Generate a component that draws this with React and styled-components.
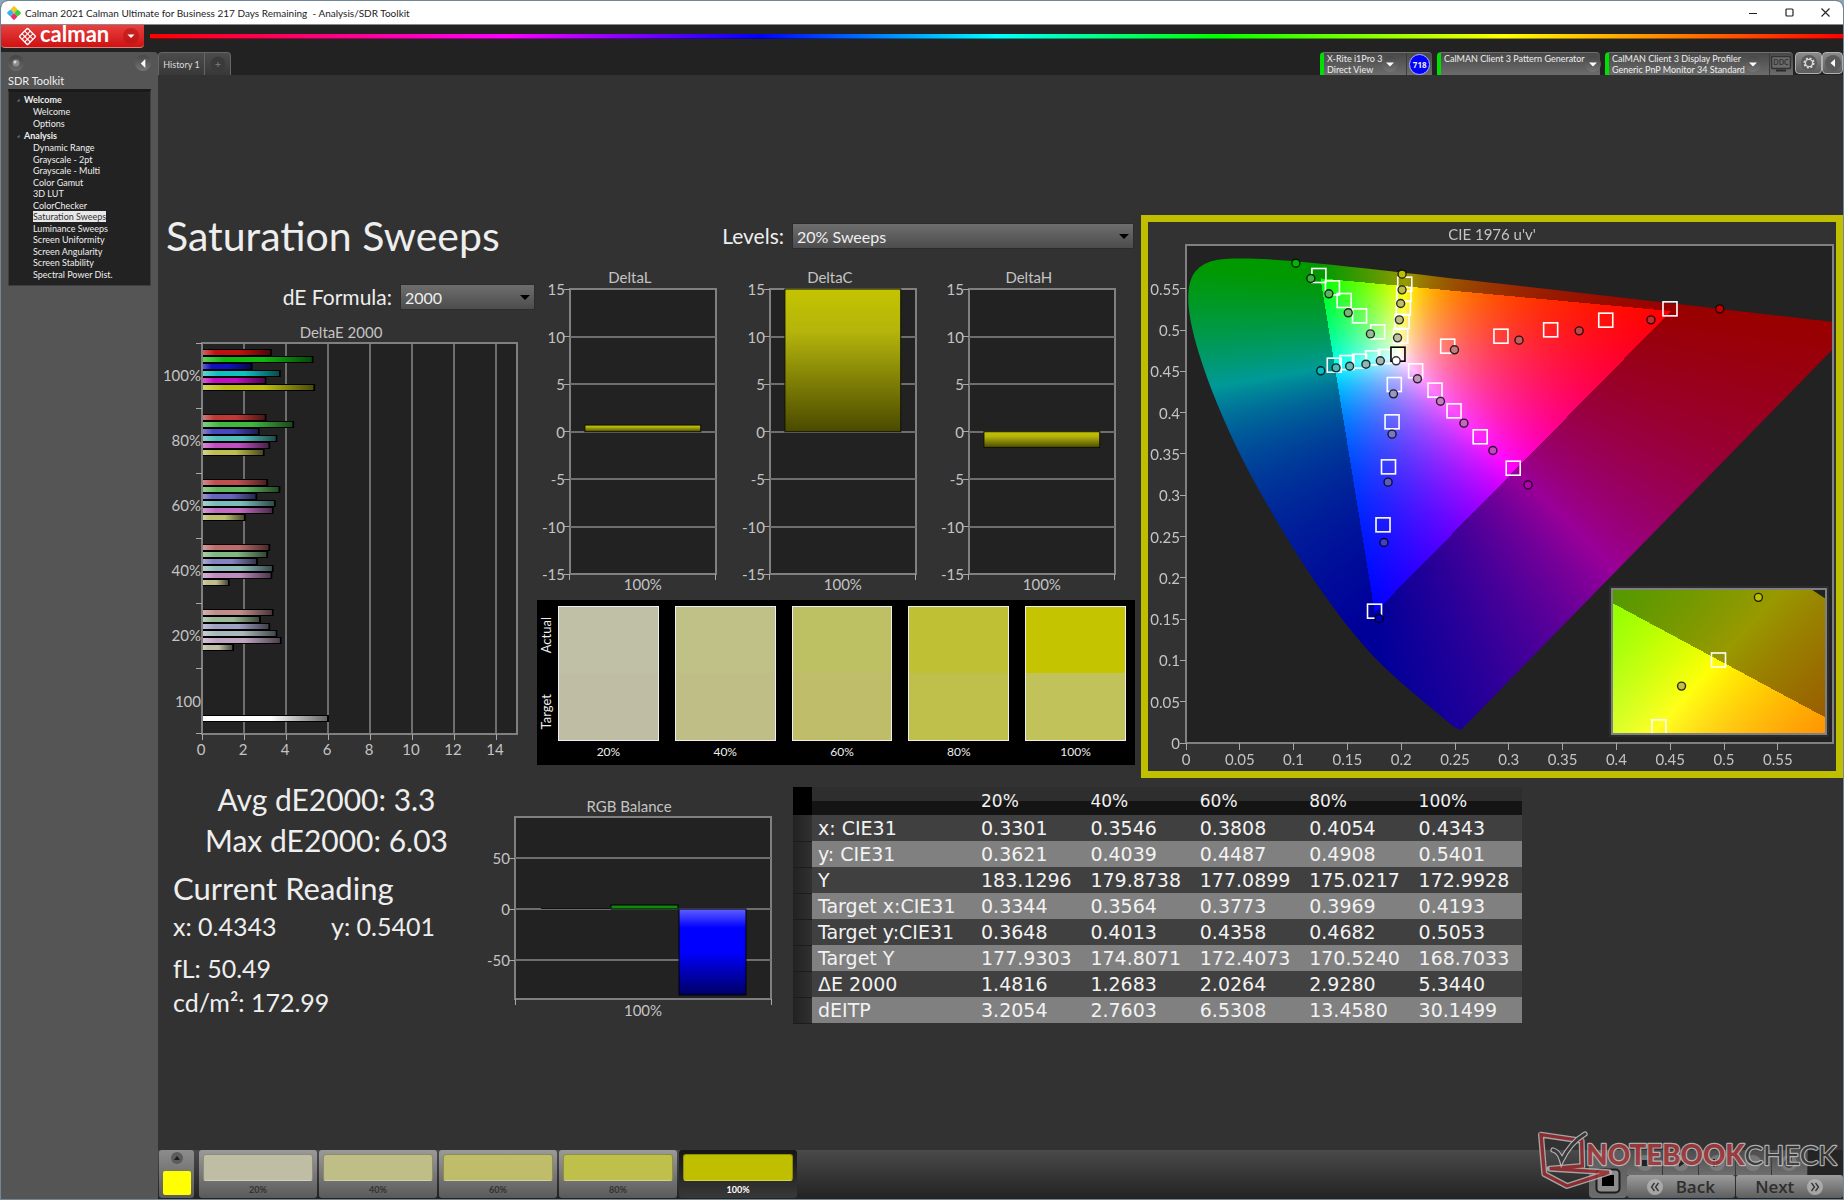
import React, { useLayoutEffect, useRef } from "react";
import styled, { createGlobalStyle, css } from "styled-components";

/* ------------------------------------------------------------------ data */

const NAV = [
  { title: "Welcome", items: ["Welcome", "Options"] },
  {
    title: "Analysis",
    items: [
      "Dynamic Range", "Grayscale - 2pt", "Grayscale - Multi", "Color Gamut", "3D LUT", "ColorChecker",
      "Saturation Sweeps", "Luminance Sweeps", "Screen Uniformity", "Screen Angularity", "Screen Stability",
      "Spectral Power Dist.",
    ],
  },
];

const LEVELS = [
  { label: "20%", actual: "#bfc0a6", target: "#bfbea5" },
  { label: "40%", actual: "#bfc186", target: "#bfbe86" },
  { label: "60%", actual: "#bec163", target: "#bfbd6a" },
  { label: "80%", actual: "#bfc033", target: "#bfc04b" },
  { label: "100%", actual: "#c4c500", target: "#c2c25a" },
];

const TILES = ["#bfbea5", "#bfbe86", "#bfbd6a", "#bfc04b", "#bfbf00"];

const READINGS = [
  ["x: CIE31", "0.3301", "0.3546", "0.3808", "0.4054", "0.4343"],
  ["y: CIE31", "0.3621", "0.4039", "0.4487", "0.4908", "0.5401"],
  ["Y", "183.1296", "179.8738", "177.0899", "175.0217", "172.9928"],
  ["Target x:CIE31", "0.3344", "0.3564", "0.3773", "0.3969", "0.4193"],
  ["Target y:CIE31", "0.3648", "0.4013", "0.4358", "0.4682", "0.5053"],
  ["Target Y", "177.9303", "174.8071", "172.4073", "170.5240", "168.7033"],
  ["ΔE 2000", "1.4816", "1.2683", "2.0264", "2.9280", "5.3440"],
  ["dEITP", "3.2054", "2.7603", "6.5308", "13.4580", "30.1499"],
];

const DELTA_E = [
  { label: "100%", values: [3.28, 5.26, 2.36, 3.7, 3.02, 5.34], colors: ["#c01010", "#10b810", "#1010c0", "#10c0c0", "#c010c0", "#bfbf10"] },
  { label: "80%", values: [3.02, 4.34, 2.7, 3.54, 3.2, 2.93], colors: ["#c03838", "#40b840", "#4848c0", "#50bcbc", "#c050c0", "#bfbf50"] },
  { label: "60%", values: [3.1, 3.68, 2.58, 3.46, 3.36, 2.03], colors: ["#c05050", "#60b860", "#6666c0", "#78bcbc", "#c06cc0", "#bfbf70"] },
  { label: "40%", values: [3.2, 3.1, 2.62, 3.36, 3.3, 1.27], colors: ["#c06c6c", "#80b880", "#8484c0", "#90bcbc", "#c08cc0", "#bfbf8c"] },
  { label: "20%", values: [3.36, 2.76, 3.2, 3.54, 3.74, 1.48], colors: ["#c08c8c", "#98b898", "#a0a0c4", "#a8b8bc", "#c0a4c0", "#bfbfa4"] },
];

const TARGETS = [
  [0.1235, 0.566], [0.1361, 0.551], [0.147, 0.5357], [0.1613, 0.5171], [0.1781, 0.4978],
  [0.2033, 0.5555], [0.2025, 0.543], [0.202, 0.5264], [0.2008, 0.5103], [0.1995, 0.4925],
  [0.2432, 0.4804], [0.2927, 0.4925], [0.3389, 0.5002], [0.3901, 0.5119], [0.4498, 0.5256],
  [0.1378, 0.4574], [0.1496, 0.4606], [0.1613, 0.4623], [0.1735, 0.4663], [0.1853, 0.4679],
  [0.1936, 0.434], [0.1915, 0.3888], [0.1882, 0.3343], [0.1831, 0.2641], [0.1752, 0.1596],
  [0.2134, 0.4506], [0.2314, 0.4272], [0.2491, 0.4021], [0.2734, 0.3707], [0.3041, 0.3327],
];

const MEASURED = [
  [0.1021, 0.5809, "#00b800"], [0.116, 0.5623, "#3cb43c"], [0.1328, 0.5438, "#5cb45c"], [0.1508, 0.5208, "#78b478"], [0.1714, 0.4953, "#98b898"],
  [0.2008, 0.5676, "#bfbf00"], [0.2008, 0.5486, "#bfbf48"], [0.1995, 0.5321, "#bfbf68"], [0.1983, 0.5123, "#bfbf84"], [0.1966, 0.4905, "#bfbfa4"],
  [0.2495, 0.476, "#c08080"], [0.3095, 0.4877, "#c06060"], [0.3654, 0.499, "#c04848"], [0.4321, 0.5123, "#c03030"], [0.496, 0.5256, "#c00000"],
  [0.1252, 0.4506, "#00c0c0"], [0.1395, 0.4542, "#48b8b8"], [0.1521, 0.4562, "#68b8b8"], [0.1672, 0.4586, "#88b8b8"], [0.1806, 0.4627, "#a4b8b8"],
  [0.1928, 0.4227, "#9898c0"], [0.1915, 0.3739, "#7878c0"], [0.1878, 0.3158, "#5c5cc0"], [0.184, 0.2427, "#4040c0"], [0.1794, 0.1507, "#0000b8"],
  [0.2151, 0.4409, "#c098c0"], [0.2365, 0.4138, "#c080c0"], [0.2583, 0.3872, "#c068c0"], [0.2852, 0.3541, "#c048c0"], [0.3179, 0.3125, "#b000b0"],
  [0.1953, 0.4627, "#ffffff"],
];

/* CIE 1931 spectral locus, x and y */
const LOCUS = [
  [0.1733, 0.0048], [0.1714, 0.0051], [0.1689, 0.0069], [0.1644, 0.0109], [0.1566, 0.0177], [0.144, 0.0297],
  [0.1355, 0.0399], [0.1241, 0.0578], [0.1096, 0.0868], [0.0913, 0.1327], [0.0687, 0.2007], [0.0454, 0.295],
  [0.0235, 0.4127], [0.0082, 0.5384], [0.0039, 0.6548], [0.0139, 0.7502], [0.0389, 0.812], [0.0743, 0.8338],
  [0.1142, 0.8262], [0.1547, 0.8059], [0.1929, 0.7816], [0.2296, 0.7543], [0.3016, 0.6923], [0.3731, 0.6245],
  [0.4441, 0.5547], [0.5125, 0.4866], [0.5752, 0.4242], [0.627, 0.3725], [0.6658, 0.334], [0.6915, 0.3083],
  [0.719, 0.2809], [0.7347, 0.2653],
];

/* ---------------------------------------------------------- colour maths */

const xyToUv = (x, y) => {
  const d = -2 * x + 12 * y + 3;
  return [(4 * x) / d, (9 * y) / d];
};

const uvToXy = (u, v) => {
  const d = 6 * u - 16 * v + 12;
  return [(9 * u) / d, (4 * v) / d];
};

function chromaColor(x, y) {
  const X = x / y;
  const Z = (1 - x - y) / y;
  const rgb = [
    3.2406 * X - 1.5372 - 0.4986 * Z,
    -0.9689 * X + 1.8758 + 0.0415 * Z,
    0.0557 * X - 0.204 + 1.057 * Z,
  ];
  const inside = Math.min(...rgb) >= 0;
  const max = Math.max(...rgb);
  return rgb.map((c) => (255 * (inside ? 1 : 0.6) * Math.max(0, c)) / max);
}

/* Fills a rectangle of the canvas with chromaticity colours, cut off at the spectral locus. */
function paintRegion(ctx, rect, toXy, fromXy) {
  const buffer = document.createElement("canvas");
  buffer.width = rect.w;
  buffer.height = rect.h;
  const bctx = buffer.getContext("2d");
  const image = bctx.createImageData(rect.w, rect.h);
  for (let j = 0; j < rect.h; j++) {
    for (let i = 0; i < rect.w; i++) {
      const [x, y] = toXy(rect.x + i + 0.5, rect.y + j + 0.5);
      const [r, g, b] = chromaColor(x, Math.max(y, 0.001));
      const k = 4 * (j * rect.w + i);
      image.data[k] = r;
      image.data[k + 1] = g;
      image.data[k + 2] = b;
      image.data[k + 3] = 255;
    }
  }
  bctx.putImageData(image, 0, 0);
  ctx.save();
  ctx.fillStyle = "#222222";
  ctx.fillRect(rect.x, rect.y, rect.w, rect.h);
  ctx.beginPath();
  ctx.rect(rect.x, rect.y, rect.w, rect.h);
  ctx.clip();
  const pts = LOCUS.map(([x, y]) => fromXy(x, y));
  ctx.beginPath();
  ctx.moveTo(pts[0][0], pts[0][1]);
  for (let n = 1; n < pts.length - 1; n++) {
    const mx = (pts[n][0] + pts[n + 1][0]) / 2;
    const my = (pts[n][1] + pts[n + 1][1]) / 2;
    ctx.quadraticCurveTo(pts[n][0], pts[n][1], mx, my);
  }
  ctx.lineTo(pts[pts.length - 1][0], pts[pts.length - 1][1]);
  ctx.closePath();
  ctx.clip();
  ctx.drawImage(buffer, rect.x, rect.y);
  ctx.restore();
}

/* ---------------------------------------------------------------- styles */

const UI = `Lato, "Open Sans", sans-serif`;

const GlobalStyle = createGlobalStyle`
  *, *::before, *::after { box-sizing: border-box; }
  body { margin: 0; background: #8fa6b8; font-family: ${UI}; color: #eeeeee; }
  button, select { font: inherit; color: inherit; margin: 0; }
  button { padding: 0; border: 0; background: none; cursor: pointer; }
  svg { display: block; }
  h1, h2, p, ul { margin: 0; padding: 0; }
`;

const Window = styled.div`
  min-height: 100vh;
  display: flex;
  flex-direction: column;
  border: 1px solid #6f8799;
  border-radius: 8px 8px 0 0;
  background: #222222;
  overflow: hidden;
  position: relative;
`;

const TitleBar = styled.header`
  height: 24px;
  display: flex;
  align-items: center;
  gap: 4px;
  padding-left: 6px;
  background: #ffffff;
  border-bottom: 1px solid #8a8a8a;
  color: #1c1c1c;
  font: 10px/22px Lato, sans-serif;
  white-space: pre;
`;

const WindowButtons = styled.div`
  margin-left: auto;
  display: flex;
`;

const WindowButton = styled.button`
  width: 36px;
  height: 22px;
  display: grid;
  place-items: center;
`;

const BrandRow = styled.div`
  height: 27px;
  display: flex;
  align-items: flex-start;
  gap: 6px;
`;

const BrandButton = styled.button`
  width: 143px;
  height: 23px;
  display: flex;
  align-items: center;
  padding: 0 5px 0 17px;
  border-radius: 0 0 4px 4px;
  border-bottom: 1px solid #d98080;
  background: linear-gradient(#e84040, #cf1212);
  svg:last-child { margin-left: auto; }
`;

const BrandName = styled.span`
  margin-left: 3px;
  color: #ffffff;
  font: 700 22px/20px Lato, sans-serif;
  padding-bottom: 4px;
`;

const Spectrum = styled.div`
  flex: 1;
  height: 5px;
  margin-top: 9px;
  border-bottom: 1px solid rgba(0, 0, 0, 0.4);
  background: linear-gradient(90deg, #f00, #f0f 21%, #00f 36%, #0ff 50%, #0f0 63%, #ff0 80%, #f00);
`;

const Body = styled.div`
  flex: 1;
  display: grid;
  grid-template-columns: 157px minmax(0, 1fr);
`;

const Sidebar = styled.aside`
  padding: 0 7px;
  background: #555555;
  border-radius: 0 4px 0 0;
`;

const SidebarTools = styled.div`
  height: 22px;
  display: flex;
  justify-content: space-between;
  align-items: center;
`;

const RoundButton = styled.button`
  width: 16px;
  height: 16px;
  border-radius: 50%;
  display: grid;
  place-items: center;
  flex: none;
  background: ${(p) => p.$tone || "linear-gradient(#474747, #747474)"};
`;

const SidebarTitle = styled.h2`
  font-size: 11px;
  line-height: 13px;
  font-weight: 400;
`;

const Tree = styled.nav`
  height: 197px;
  margin-top: 2px;
  padding: 1px 7px 0;
  background: #222222;
  border: 1px solid #3f3f3f;
  border-top: 3px solid #1a1a1a;
  font-size: 9px;
`;

const TreeHead = styled.div`
  height: 13px;
  display: flex;
  align-items: center;
  gap: 4px;
  font-weight: 700;
`;

const TreeList = styled.ul`
  list-style: none;
  display: grid;
  grid-auto-rows: 1fr;
  height: ${(p) => p.$height};
  padding-left: 17px;
`;

const TreeItem = styled.li`
  display: flex;
  align-items: center;
`;

const TreeLink = styled.a`
  line-height: 11px;
  color: #eeeeee;
  text-decoration: none;
  white-space: nowrap;
  ${(p) => p.$current && css`
    background: #e8e8e8;
    color: #333333;
  `}
`;

const Main = styled.main`
  display: flex;
  flex-direction: column;
  min-width: 0;
  background: #323232;
`;

const TabBar = styled.div`
  height: 23px;
  display: flex;
  align-items: stretch;
  background: #222222;
`;

const tabFace = css`
  border: 1px solid #666666;
  border-bottom: 0;
  background: linear-gradient(#4c4c4c, #383838);
`;

const Tab = styled.button`
  ${tabFace}
  width: 47px;
  border-radius: 4px 0 0 0;
  font-size: 9px;
  white-space: nowrap;
  color: #dddddd;
`;

const AddTab = styled.button`
  ${tabFace}
  width: 26px;
  border-left: 0;
  border-radius: 0 4px 0 0;
  display: grid;
  place-items: center;
`;

const Devices = styled.div`
  margin-left: auto;
  display: flex;
  gap: 5px;
`;

const Device = styled.div`
  width: ${(p) => p.$width};
  display: flex;
  border-left: 4px solid #00e000;
  border-radius: 4px 4px 0 0;
  border-top: 1px solid #707070;
  background: linear-gradient(#484848, #6c6c6c);
`;

const DeviceName = styled.p`
  flex: 1;
  padding-left: 3px;
  font-size: 9px;
  line-height: 11px;
  white-space: pre;
`;

const DeviceMenu = styled(RoundButton)`
  margin: 3px 8px 0 0;
`;

const DeviceExtra = styled.div`
  width: 27px;
  display: grid;
  place-items: center;
  border-left: 1px solid #3c3c3c;
`;

const Count = styled.span`
  width: 21px;
  height: 21px;
  border-radius: 50%;
  border: 1px solid #b0b0ff;
  background: #0000ff;
  font: 700 8px/19px "Open Sans", sans-serif;
  text-align: center;
`;

const ToolGroup = styled.div`
  display: flex;
  margin-left: -3px;
`;

const ToolButton = styled.button`
  width: ${(p) => p.$width};
  height: 22px;
  display: grid;
  place-items: center;
  border: 1px solid #b0b0b0;
  border-radius: 4px;
  background: linear-gradient(#8a8a8a, #5c5c5c);
`;

const Dashboard = styled.section`
  flex: 1;
  padding-top: 140px;
`;

const TopGrid = styled.div`
  display: grid;
  grid-template-columns: 379fr 604fr 702fr;
  align-items: start;
`;

const BottomGrid = styled.div`
  display: grid;
  grid-template-columns: 322fr 313fr 729fr 321fr;
  align-items: start;
`;

const Chart = styled.svg`
  width: 100%;
  height: auto;
  font-family: ${UI};
  font-size: 15px;
  fill: #c4c4c4;
`;

const PageTitle = styled.h1`
  padding-left: 8px;
  font-size: 41px;
  line-height: 42px;
  font-weight: 400;
  white-space: nowrap;
`;

const Field = styled.div`
  display: flex;
  justify-content: flex-end;
  align-items: center;
  gap: ${(p) => p.$gap};
  padding: ${(p) => p.$pad};
`;

const FieldLabel = styled.label`
  font-size: 21px;
  line-height: 26px;
  white-space: nowrap;
`;

const SelectBox = styled.span`
  display: grid;
  align-items: center;
  width: ${(p) => p.$width};
  > * { grid-area: 1 / 1; }
  > svg { justify-self: end; margin-right: 5px; pointer-events: none; }
`;

const Select = styled.select`
  appearance: none;
  height: 26px;
  padding: 0 20px 0 4px;
  border: 1px solid #2c2c2c;
  border-radius: 0;
  background: linear-gradient(#6e6e6e, #4c4c4c);
  font-size: 16px;
`;

const DeltaRow = styled.div`
  display: grid;
  grid-template-columns: repeat(3, 1fr);
  padding: 19px 5px 0 0;
`;

const SwatchPanel = styled.div`
  height: 165px;
  display: flex;
  margin: 3px 6px 0 0;
  padding: 6px 9px 0 1px;
  background: #000000;
`;

const SideLabels = styled.div`
  width: 20px;
  height: 135px;
  display: flex;
  flex-direction: column;
  justify-content: space-between;
  padding: 11px 0 12px;
  font-size: 13px;
  line-height: 16px;
  span { writing-mode: vertical-rl; transform: rotate(180deg); }
`;

const Swatches = styled.div`
  flex: 1;
  display: grid;
  grid-template-columns: repeat(5, 1fr);
  gap: 16px;
`;

const Swatch = styled.figure`
  margin: 0;
  text-align: center;
  font-size: 12px;
  line-height: 21px;
`;

const SwatchFace = styled.div`
  height: 135px;
  border: 1px solid #eeeeee;
  background: linear-gradient(${(p) => p.$actual} 50%, ${(p) => p.$target} 50%);
`;

const CieFrame = styled.div`
  display: grid;
  border: 7px solid #bfbf00;
  > * { grid-area: 1 / 1; }
  canvas { width: 100%; height: auto; display: block; }
`;

const Stats = styled.div`
  padding: 1px 0 0 15px;
  font-size: 25px;
  line-height: 34px;
  white-space: nowrap;
`;

const Summary = styled.p`
  font-size: 30px;
  line-height: 41px;
  text-align: center;
`;

const StatsTitle = styled.h2`
  margin-top: 7px;
  font-size: 31px;
  line-height: 41px;
  font-weight: 400;
`;

const Pair = styled.p`
  display: grid;
  grid-template-columns: 158px 1fr;
  margin-bottom: 8px;
`;

const DataTable = styled.table`
  width: 100%;
  margin-top: 9px;
  border-collapse: collapse;
  table-layout: fixed;
  font: 19px/22px "DejaVu Sans", sans-serif;
  color: #f2f2f2;
  th, td {
    height: 26px;
    padding: 0 0 0 6px;
    font-weight: 400;
    text-align: left;
    white-space: nowrap;
  }
  thead th {
    height: 28px;
    font-size: 17px;
    background: linear-gradient(#2e2e2e 50%, #141414 50%);
  }
  thead td { background: #000000; }
  tbody td:first-child { background: linear-gradient(90deg, #222222, #303030); border-bottom: 1px solid #1c1c1c; }
`;

const DataRow = styled.tr`
  background: ${(p) => (p.$light ? "#808080" : "#404040")};
`;

const Footer = styled.footer`
  height: 49px;
  display: flex;
  gap: 5px;
  padding: 0 0 1px 1px;
  background: linear-gradient(#4a4a4a, #222222);
`;

const PatternPicker = styled.button`
  width: 35px;
  display: flex;
  flex-direction: column;
  align-items: center;
  gap: 7px;
  padding-top: 2px;
  border-radius: 3px;
  background: linear-gradient(#8c8c8c, #5a5a5a);
`;

const PatternColor = styled.span`
  width: 28px;
  height: 24px;
  border-radius: 2px;
  background: #ffff00;
`;

const TileRow = styled.div`
  display: flex;
  gap: 2px;
`;

const Tile = styled.button`
  width: 118px;
  display: flex;
  flex-direction: column;
  padding: 4px 4px 0;
  border-radius: 3px;
  background: ${(p) => (p.$current ? "linear-gradient(#161616, #383838)" : "linear-gradient(#9a9a9a, #5a5a5a)")};
  color: ${(p) => (p.$current ? "#ffffff" : "#333333")};
  font: 700 9px/16px Lato, sans-serif;
`;

const TileFace = styled.span`
  width: 100%;
  height: 29px;
  margin-bottom: 1px;
  border: 1px solid rgba(0, 0, 0, 0.25);
  border-bottom-color: rgba(255, 255, 255, 0.3);
  border-radius: 3px;
  background: ${(p) => p.$color};
`;

const Transport = styled.div`
  width: 254px;
  margin-left: auto;
  display: grid;
  grid-template-columns: 38px 1fr;
`;

const StopButton = styled.button`
  display: grid;
  align-content: end;
  justify-items: center;
  padding-bottom: 4px;
  border-radius: 4px;
  background: linear-gradient(#5c5c5c, #6c6c6c);
`;

const TransportRows = styled.div`
  display: grid;
  grid-template-rows: 25px 1fr;
`;

const PlayRow = styled.div`
  display: grid;
  grid-template-columns: repeat(6, 1fr);
  gap: 1px;
`;

const PlayButton = styled.button`
  display: grid;
  place-items: center;
  background: ${(p) => (p.$off ? "#242424" : "linear-gradient(#4c4c4c, #6e6e6e)")};
`;

const StepRow = styled.div`
  display: grid;
  grid-template-columns: 1fr 1fr;
  gap: 1px;
`;

const StepButton = styled.button`
  display: flex;
  align-items: center;
  justify-content: center;
  gap: 13px;
  border-radius: 3px;
  background: linear-gradient(#9c9c9c, #5e5e5e);
  color: #2e2e2e;
  font: 600 17px/20px "Open Sans", sans-serif;
`;

const Watermark = styled.svg`
  position: absolute;
  right: 0;
  bottom: 0;
  width: 314px;
  height: 75px;
  pointer-events: none;
`;

/* ----------------------------------------------------------------- parts */

const Triangle = ({ points, size = 10, fill = "#ffffff" }) => (
  <svg width={size} height={size} viewBox="0 0 10 10" aria-hidden="true">
    <polygon points={points} fill={fill} />
  </svg>
);
const DOWN = "0,3 10,3 5,8";
const LEFT = "7,0 7,10 2,5";

function AppIcon() {
  return (
    <svg width="14" height="14" viewBox="0 0 14 14" aria-hidden="true">
      <rect x="4.4" y="0.8" width="5.2" height="5.2" rx="1" transform="rotate(45 7 3.4)" fill="#f7c51e" />
      <rect x="0.8" y="4.4" width="5.2" height="5.2" rx="1" transform="rotate(45 3.4 7)" fill="#35b4e8" />
      <rect x="8" y="4.4" width="5.2" height="5.2" rx="1" transform="rotate(45 10.6 7)" fill="#3bd13b" />
      <rect x="4.4" y="8" width="5.2" height="5.2" rx="1" transform="rotate(45 7 10.6)" fill="#ef2d6d" />
    </svg>
  );
}

function BrandMark() {
  const cells = [];
  for (let r = 0; r < 3; r++) for (let c = 0; c < 3; c++) cells.push([r, c]);
  return (
    <svg width="19" height="19" viewBox="0 0 19 19" aria-hidden="true">
      <g transform="rotate(45 9.5 9.5)">
        <rect x="3" y="3" width="13" height="13" rx="1.5" fill="#ffffff" />
        {cells.map(([r, c]) => (
          <rect key={`${r}${c}`} x={4.3 + 3.8 * c} y={4.3 + 3.8 * r} width="2.8" height="2.8" rx="0.8" fill="#d92626" />
        ))}
      </g>
    </svg>
  );
}

const Tick = (props) => <line stroke="#a8a8a8" strokeWidth="1" shapeRendering="crispEdges" {...props} />;
const Grid = (props) => <line stroke="#6e6e6e" strokeWidth="2" shapeRendering="crispEdges" {...props} />;
const Plot = ({ x, y, w, h }) => (
  <rect x={x} y={y} width={w} height={h} fill="#222222" stroke="#808080" strokeWidth="2" shapeRendering="crispEdges" />
);

function HorizontalBar({ x, y, length, color }) {
  return (
    <g>
      <rect x={x} y={y - 1} width={length + 1} height="7" fill="#000000" />
      <rect x={x} y={y} width={length - 1} height="5" fill={color} />
      <rect x={x} y={y} width={length - 1} height="5" fill="url(#shade)" />
    </g>
  );
}

function DeltaEChart() {
  const left = 44;
  const top = 17;
  const unit = 21;
  const band = 65;
  return (
    <Chart viewBox="0 -5 379 445" role="img" aria-label="DeltaE 2000">
      <defs>
        <linearGradient id="shade" x1="0" x2="1">
          <stop offset="0" stopColor="#fff" stopOpacity="0.35" />
          <stop offset="0.2" stopColor="#fff" stopOpacity="0" />
          <stop offset="0.55" stopColor="#000" stopOpacity="0" />
          <stop offset="1" stopColor="#000" stopOpacity="0.6" />
        </linearGradient>
      </defs>
      <text x="183" y="12" textAnchor="middle">DeltaE 2000</text>
      <rect x={left} y={top} width="315" height="391" fill="#222222" />
      {[2, 4, 6, 8, 10, 12, 14].map((n) => (
        <Grid key={n} x1={left + unit * n} x2={left + unit * n} y1={top} y2={top + 391} />
      ))}
      {DELTA_E.map((group, g) => (
        <g key={group.label}>
          <text x="43" y={top + band * g + 38} textAnchor="end">{group.label}</text>
          {group.values.map((value, i) => (
            <HorizontalBar key={i} x={left} y={top + band * g + 7 + i * 7} length={value * unit} color={group.colors[i]} />
          ))}
        </g>
      ))}
      <text x="43" y={top + band * 5 + 39} textAnchor="end">100</text>
      <HorizontalBar x={left} y={390} length={126} color="#ffffff" />
      <rect x={left} y={top} width="315" height="391" fill="none" stroke="#808080" strokeWidth="2" shapeRendering="crispEdges" />
      {[0, 1, 2, 3, 4, 5, 6].map((n) => (
        <Tick key={n} x1={left - 6} x2={left} y1={top + band * n + 0.5} y2={top + band * n + 0.5} />
      ))}
      {[0, 2, 4, 6, 8, 10, 12, 14].map((n) => (
        <g key={n}>
          <Tick x1={left + unit * n} x2={left + unit * n} y1="408" y2="414" />
          <text x={left + unit * n - 1} y="429" textAnchor="middle">{n}</text>
        </g>
      ))}
    </Chart>
  );
}

function DeltaChart({ title, value }) {
  const zero = 164;
  const unit = 9.53;
  const shown = Math.min(value, 15);
  const y = shown > 0 ? zero - shown * unit : zero;
  return (
    <Chart viewBox="0 0 200 330" role="img" aria-label={title}>
      <defs>
        <linearGradient id={`fade${title}`} x1="0" x2="0" y1="0" y2="1">
          <stop offset="0" stopColor="#c4c400" />
          <stop offset="0.3" stopColor="#b4b40c" />
          <stop offset="1" stopColor="#4a4a00" />
        </linearGradient>
      </defs>
      <text x="93" y="15" textAnchor="middle">{title}</text>
      <Plot x={33} y={21} w={146} h={286} />
      {[15, 10, 5, 0, -5, -10, -15].map((n) => (
        <g key={n}>
          {Math.abs(n) < 15 && <Grid x1="33" x2="179" y1={zero - n * unit} y2={zero - n * unit} />}
          <Tick x1="27" x2="33" y1={zero - n * unit} y2={zero - n * unit} />
          <text x="28" y={zero - n * unit + 6} textAnchor="end">{n}</text>
        </g>
      ))}
      <rect x="48" y={y} width="116" height={Math.abs(shown) * unit} fill={`url(#fade${title})`} stroke="#111100" strokeWidth="1" />
      <Tick x1="33" x2="33" y1="307" y2="313" />
      <Tick x1="179" x2="179" y1="307" y2="313" />
      <text x="106" y="323" textAnchor="middle">100%</text>
    </Chart>
  );
}

function RgbChart() {
  return (
    <Chart viewBox="0 0 313 245" role="img" aria-label="RGB Balance">
      <defs>
        <linearGradient id="blueBar" x1="0" x2="0" y1="0" y2="1">
          <stop offset="0" stopColor="#6060ff" />
          <stop offset="0.22" stopColor="#0000ff" />
          <stop offset="0.5" stopColor="#0000ff" />
          <stop offset="1" stopColor="#000064" />
        </linearGradient>
      </defs>
      <text x="149" y="34" textAnchor="middle">RGB Balance</text>
      <Plot x={35} y={39} w={256} h={182} />
      {[50, 0, -50].map((n) => (
        <g key={n}>
          <Grid x1="35" x2="291" y1={131 - n * 1.02} y2={131 - n * 1.02} />
          <Tick x1="29" x2="35" y1={131 - n * 1.02} y2={131 - n * 1.02} />
          <text x="30" y={137 - n * 1.02} textAnchor="end">{n}</text>
        </g>
      ))}
      <rect x="61" y="130" width="69" height="1" fill="#111111" />
      <rect x="131" y="127" width="67" height="4" fill="#0c8a0c" stroke="#000000" />
      <rect x="199" y="131" width="67" height="86" fill="url(#blueBar)" stroke="#000000" />
      <Tick x1="35" x2="35" y1="221" y2="227" />
      <Tick x1="291" x2="291" y1="221" y2="227" />
      <text x="163" y="238" textAnchor="middle">100%</text>
    </Chart>
  );
}

const CIE = { w: 688, h: 549, left: 38, right: 685, top: 23, bottom: 521, u: 1076, v: 826 };
const INSET = { x: 464, y: 367, w: 214, h: 145, cx: 570.5, cy: 438, kx: 2660, ky: 1800 };
const cieX = (u) => CIE.left + CIE.u * u;
const cieY = (v) => CIE.bottom - CIE.v * v;
const insetX = (x) => INSET.cx + (x - 0.4193) * INSET.kx;
const insetY = (y) => INSET.cy - (y - 0.5053) * INSET.ky;

const Square = ({ x, y, color = "#ffffff" }) => (
  <rect x={x - 7} y={y - 7} width="14" height="14" fill="none" stroke={color} strokeWidth="1.6" />
);
const Dot = ({ x, y, color }) => <circle cx={x} cy={y} r="4" fill={color} stroke="#000000" strokeOpacity="0.8" strokeWidth="1.4" />;

function CieChart() {
  const ref = useRef(null);
  useLayoutEffect(() => {
    const ctx = ref.current.getContext("2d");
    paintRegion(
      ctx,
      { x: CIE.left, y: CIE.top, w: CIE.right - CIE.left, h: CIE.bottom - CIE.top },
      (px, py) => uvToXy((px - CIE.left) / CIE.u, (CIE.bottom - py) / CIE.v),
      (x, y) => {
        const [u, v] = xyToUv(x, y);
        return [cieX(u), cieY(v)];
      }
    );
    ctx.fillStyle = "#2c2c2c";
    ctx.fillRect(INSET.x - 3, INSET.y - 3, INSET.w + 6, INSET.h + 6);
    paintRegion(
      ctx,
      INSET,
      (px, py) => [0.4193 + (px - INSET.cx) / INSET.kx, 0.5053 + (INSET.cy - py) / INSET.ky],
      (x, y) => [insetX(x), insetY(y)]
    );
  }, []);

  const steps = Array.from({ length: 12 }, (_, n) => Number((n * 0.05).toFixed(2)));
  return (
    <CieFrame>
      <canvas ref={ref} width={CIE.w} height={CIE.h} />
      <Chart viewBox={`0 0 ${CIE.w} ${CIE.h}`} role="img" aria-label="CIE 1976 u'v'">
        <defs>
          <clipPath id="insetClip">
            <rect x={INSET.x} y={INSET.y} width={INSET.w} height={INSET.h} />
          </clipPath>
        </defs>
        <text x="344" y="18" textAnchor="middle">CIE 1976 u'v'</text>
        <rect x={CIE.left} y={CIE.top} width={CIE.right - CIE.left} height={CIE.bottom - CIE.top} fill="none" stroke="#808080" strokeWidth="2" />
        {steps.map((n) => (
          <g key={n}>
            <Tick x1={cieX(n)} x2={cieX(n)} y1={CIE.bottom} y2={CIE.bottom + 7} />
            <text x={cieX(n)} y="543" textAnchor="middle">{n}</text>
            <Tick x1={CIE.left - 6} x2={CIE.left} y1={cieY(n)} y2={cieY(n)} />
            <text x={CIE.left - 6} y={cieY(n) + 6} textAnchor="end">{n}</text>
          </g>
        ))}
        {TARGETS.map(([u, v]) => <Square key={`${u}-${v}`} x={cieX(u)} y={cieY(v)} />)}
        <Square x={cieX(0.197)} y={cieY(0.4707)} color="#000000" />
        {MEASURED.map(([u, v, color]) => <Dot key={`${u}-${v}`} x={cieX(u)} y={cieY(v)} color={color} />)}
        <g clipPath="url(#insetClip)">
          <Square x={insetX(0.4193)} y={insetY(0.5053)} />
          <Square x={insetX(0.3969)} y={insetY(0.4682)} />
          <Dot x={insetX(0.4343)} y={insetY(0.5401)} color="#bfbf00" />
          <Dot x={insetX(0.4054)} y={insetY(0.4908)} color="#bfbf48" />
        </g>
        <rect x={INSET.x} y={INSET.y} width={INSET.w} height={INSET.h} fill="none" stroke="#808080" strokeWidth="2" />
      </Chart>
    </CieFrame>
  );
}

function PlayIcon({ kind }) {
  return (
    <svg width="18" height="18" viewBox="0 0 18 18" aria-hidden="true">
      <circle cx="9" cy="9" r="8" fill="#8a8a8a" opacity="0.6" />
      {kind === "stop" && <rect x="6" y="6" width="6" height="6" fill="#222" />}
      {kind === "play" && <path d="M7 5 L13 9 L7 13Z" fill="#222" />}
      {kind === "step" && <path d="M5 5h2v8h-2z M8 5 L13 9 L8 13Z" fill="#222" />}
      {kind === "loop" && <path d="M4 9q2.5-4 5 0t5 0" fill="none" stroke="#333" strokeWidth="1.6" />}
      {kind === "refresh" && <path d="M13 9a4 4 0 1 1-2-3.4 M11 3v3h-3" fill="none" stroke="#333" strokeWidth="1.5" />}
    </svg>
  );
}

function Chevrons({ back }) {
  return (
    <svg width="16" height="16" viewBox="0 0 16 16" aria-hidden="true">
      <circle cx="8" cy="8" r="8" fill="#b4b4b4" opacity="0.8" />
      <path
        d={back ? "M7.5 4L4.5 8l3 4M11.5 4l-3 4 3 4" : "M4.5 4l3 4-3 4M8.5 4l3 4-3 4"}
        fill="none" stroke="#333333" strokeWidth="1.3"
      />
    </svg>
  );
}

function NotebookCheck() {
  const box = "M36 32 L158 50 L160 126 L62 134 L240 145 L114 186 L46 150 Z";
  const tick = "M72 78 q18 4 26 32 q26 -54 70 -80";
  const text = { x: 172, y: 122, fontFamily: "Lato, sans-serif", strokeWidth: 7, strokeLinejoin: "round", paintOrder: "stroke", stroke: "#c4c4c4" };
  return (
    <Watermark viewBox="0 0 942 225" aria-label="NotebookCheck" opacity="0.85">
      <path d={box} fill="none" stroke="#b8b8b8" strokeWidth="18" strokeLinejoin="round" />
      <path d={box} fill="none" stroke="#9c2c30" strokeWidth="10" strokeLinejoin="miter" />
      <path d={tick} fill="none" stroke="#c8c8c8" strokeWidth="16" strokeLinecap="round" />
      <path d={tick} fill="none" stroke="#383838" strokeWidth="9" strokeLinecap="round" />
      <text {...text} fontSize="83">
        <tspan fontWeight="900" fill="#a8383c">NOTEBOOK</tspan>
        <tspan fontWeight="400" fill="#3a3a3a">CHECK</tspan>
      </text>
    </Watermark>
  );
}

/* ------------------------------------------------------------------- app */

export default function App() {
  return (
    <>
      <GlobalStyle />
      <Window>
        <TitleBar>
          <AppIcon />
          <span>{"Calman 2021 Calman Ultimate for Business 217 Days Remaining  - Analysis/SDR Toolkit"}</span>
          <WindowButtons>
            <WindowButton aria-label="Minimize">
              <svg width="9" height="9"><path d="M0 5.5h8" stroke="#222" /></svg>
            </WindowButton>
            <WindowButton aria-label="Maximize">
              <svg width="9" height="9"><rect x="1" y="1" width="7" height="7" rx="1" fill="none" stroke="#222" strokeWidth="1.2" /></svg>
            </WindowButton>
            <WindowButton aria-label="Close">
              <svg width="9" height="9"><path d="M0.5 0.5l8 8M8.5 0.5l-8 8" stroke="#222" strokeWidth="1.1" /></svg>
            </WindowButton>
          </WindowButtons>
        </TitleBar>

        <BrandRow>
          <BrandButton aria-label="calman menu">
            <BrandMark />
            <BrandName>calman</BrandName>
            <svg width="16" height="16" viewBox="0 0 16 16">
              <circle cx="8" cy="8" r="8" fill="#b81414" opacity="0.6" />
              <polygon points="4.5,6.5 11.5,6.5 8,10" fill="#ffffff" />
            </svg>
          </BrandButton>
          <Spectrum />
        </BrandRow>

        <Body>
          <Sidebar>
            <SidebarTools>
              <RoundButton aria-label="Status" $tone="linear-gradient(#444444, #6a6a6a)">
                <svg width="8" height="8">
                  <circle cx="4" cy="4" r="3.5" fill="#8c8c8c" />
                  <circle cx="3" cy="3" r="1.5" fill="#d8d8d8" />
                </svg>
              </RoundButton>
              <RoundButton aria-label="Collapse"><Triangle points={LEFT} size={9} /></RoundButton>
            </SidebarTools>
            <SidebarTitle>SDR Toolkit</SidebarTitle>
            <Tree>
              {NAV.map((group, g) => (
                <React.Fragment key={group.title}>
                  <TreeHead>
                    <Triangle points="9,2 9,9 2,9" size={4} fill="#777777" />
                    {group.title}
                  </TreeHead>
                  <TreeList $height={g ? "138px" : "23px"}>
                    {group.items.map((item) => (
                      <TreeItem key={item}>
                        <TreeLink href="#" $current={item === "Saturation Sweeps"}>{item}</TreeLink>
                      </TreeItem>
                    ))}
                  </TreeList>
                </React.Fragment>
              ))}
            </Tree>
          </Sidebar>

          <Main>
            <TabBar>
              <Tab>History 1</Tab>
              <AddTab aria-label="Add history">
                <svg width="16" height="16"><circle cx="8" cy="8" r="7.5" fill="#3a3a3a" /><path d="M5.5 8.5h5M8 6v5" stroke="#777" /></svg>
              </AddTab>
              <Devices>
                <Device $width="112px">
                  <DeviceName>{"X-Rite i1Pro 3\nDirect View"}</DeviceName>
                  <DeviceMenu aria-label="Meter menu"><Triangle points={DOWN} size={8} /></DeviceMenu>
                  <DeviceExtra><Count>718</Count></DeviceExtra>
                </Device>
                <Device $width="163px">
                  <DeviceName>CalMAN Client 3 Pattern Generator</DeviceName>
                  <DeviceMenu aria-label="Source menu"><Triangle points={DOWN} size={8} /></DeviceMenu>
                </Device>
                <Device $width="188px">
                  <DeviceName>{"CalMAN Client 3 Display Profiler\nGeneric PnP Monitor 34 Standard"}</DeviceName>
                  <DeviceMenu aria-label="Display menu"><Triangle points={DOWN} size={8} /></DeviceMenu>
                  <DeviceExtra>
                    <svg width="20" height="16" viewBox="0 0 20 16" aria-label="DDC">
                      <rect x="0.5" y="0.5" width="19" height="12" rx="1.5" fill="#6a6a6a" stroke="#333" strokeWidth="1.5" />
                      <path d="M5 14.5h10" stroke="#2a2a2a" strokeWidth="2" />
                      <text x="10" y="9" textAnchor="middle" fontSize="7" fontWeight="700" fill="#333" fontFamily="Lato, sans-serif">DDC</text>
                    </svg>
                  </DeviceExtra>
                </Device>
                <ToolGroup>
                  <ToolButton $width="27px" aria-label="Settings">
                    <svg width="16" height="16" viewBox="0 0 16 16">
                      <circle cx="8" cy="8" r="8" fill="#5a5a5a" />
                      <circle cx="8" cy="8" r="4.6" fill="none" stroke="#d8d8d8" strokeWidth="2" strokeDasharray="2 1.6" />
                      <circle cx="8" cy="8" r="3.6" fill="none" stroke="#d8d8d8" strokeWidth="1.4" />
                    </svg>
                  </ToolButton>
                  <ToolButton $width="21px" aria-label="Collapse panel">
                    <svg width="16" height="16" viewBox="0 0 16 16">
                      <circle cx="8" cy="8" r="8" fill="#5a5a5a" />
                      <polygon points="10,4 10,12 5.5,8" fill="#ffffff" />
                    </svg>
                  </ToolButton>
                </ToolGroup>
              </Devices>
            </TabBar>

            <Dashboard>
              <TopGrid>
                <div>
                  <PageTitle>Saturation Sweeps</PageTitle>
                  <Field $gap="8px" $pad="27px 2px 11px 0">
                    <FieldLabel htmlFor="formula">dE Formula:</FieldLabel>
                    <SelectBox $width="135px">
                      <Select id="formula" defaultValue="2000"><option>2000</option></Select>
                      <Triangle points={DOWN} fill="#000000" />
                    </SelectBox>
                  </Field>
                  <DeltaEChart />
                </div>
                <div>
                  <Field $gap="8px" $pad="8px 7px 0 0">
                    <FieldLabel htmlFor="levels">Levels:</FieldLabel>
                    <SelectBox $width="342px">
                      <Select id="levels" defaultValue="20% Sweeps"><option>20% Sweeps</option></Select>
                      <Triangle points={DOWN} fill="#000000" />
                    </SelectBox>
                  </Field>
                  <DeltaRow>
                    <DeltaChart title="DeltaL" value={0.7} />
                    <DeltaChart title="DeltaC" value={18} />
                    <DeltaChart title="DeltaH" value={-1.65} />
                  </DeltaRow>
                  <SwatchPanel>
                    <SideLabels><span>Actual</span><span>Target</span></SideLabels>
                    <Swatches>
                      {LEVELS.map((level) => (
                        <Swatch key={level.label}>
                          <SwatchFace $actual={level.actual} $target={level.target} />
                          <figcaption>{level.label}</figcaption>
                        </Swatch>
                      ))}
                    </Swatches>
                  </SwatchPanel>
                </div>
                <CieChart />
              </TopGrid>

              <BottomGrid>
                <Stats>
                  <Summary>Avg dE2000: 3.3</Summary>
                  <Summary>Max dE2000: 6.03</Summary>
                  <StatsTitle>Current Reading</StatsTitle>
                  <Pair><span>x: 0.4343</span><span>y: 0.5401</span></Pair>
                  <p>fL: 50.49</p>
                  <p>cd/m²: 172.99</p>
                </Stats>
                <RgbChart />
                <DataTable>
                  <colgroup>
                    <col width="19" />
                    <col width="163" />
                    <col span="5" />
                  </colgroup>
                  <thead>
                    <tr>
                      <td />
                      <th />
                      {LEVELS.map((level) => <th key={level.label} scope="col">{level.label}</th>)}
                    </tr>
                  </thead>
                  <tbody>
                    {READINGS.map(([name, ...values], r) => (
                      <DataRow key={name} $light={r % 2 === 1}>
                        <td />
                        <th scope="row">{name}</th>
                        {values.map((value, i) => <td key={i}>{value}</td>)}
                      </DataRow>
                    ))}
                  </tbody>
                </DataTable>
              </BottomGrid>
            </Dashboard>

            <Footer>
              <PatternPicker aria-label="Pattern colour">
                <svg width="12" height="12" viewBox="0 0 12 12">
                  <circle cx="6" cy="6" r="6" fill="#5c5c5c" />
                  <polygon points="3,8 9,8 6,4" fill="#1c1c1c" />
                </svg>
                <PatternColor />
              </PatternPicker>
              <TileRow>
                {TILES.map((color, i) => (
                  <Tile key={color} $current={i === 4}>
                    <TileFace $color={color} />
                    <span>{LEVELS[i].label}</span>
                  </Tile>
                ))}
              </TileRow>
              <Transport>
                <StopButton aria-label="Stop">
                  <svg width="26" height="26" viewBox="0 0 26 26">
                    <rect x="1.5" y="1.5" width="23" height="23" rx="4" fill="#8c8c8c" stroke="#1c1c1c" strokeWidth="2" />
                    <rect x="7" y="7" width="12" height="11" fill="#000000" />
                  </svg>
                </StopButton>
                <TransportRows>
                  <PlayRow>
                    {["stop", "play", "step", "loop", "refresh"].map((kind) => (
                      <PlayButton key={kind} aria-label={kind}><PlayIcon kind={kind} /></PlayButton>
                    ))}
                    <PlayButton $off aria-label="blank" />
                  </PlayRow>
                  <StepRow>
                    <StepButton><Chevrons back />Back</StepButton>
                    <StepButton>Next<Chevrons /></StepButton>
                  </StepRow>
                </TransportRows>
              </Transport>
            </Footer>
          </Main>
        </Body>
        <NotebookCheck />
      </Window>
    </>
  );
}
